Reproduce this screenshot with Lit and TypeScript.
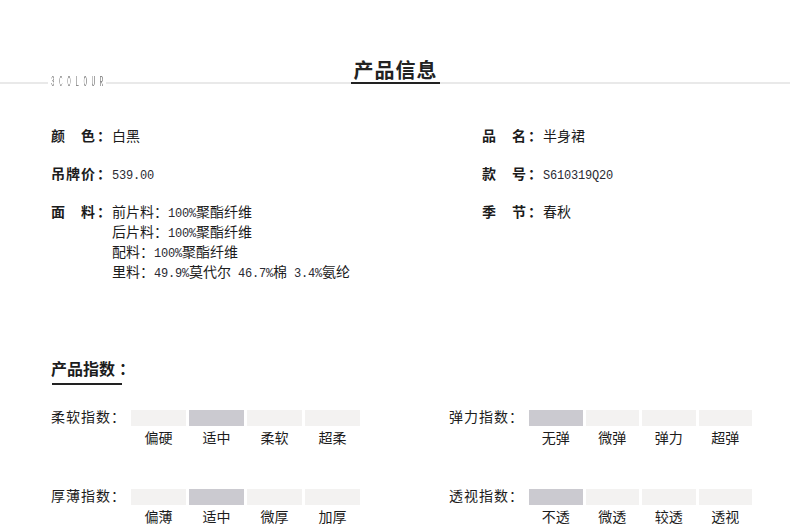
import { LitElement, html, css } from "lit";
import { customElement } from "lit/decorators.js";

const info = [
  { name: "颜色", value: html`<div class="line">白黑</div>` },
  { name: "品名", value: html`<div class="line">半身裙</div>` },
  { name: "吊牌价", value: html`<div class="line"><span class="num">539.00</span></div>` },
  { name: "款号", value: html`<div class="line"><span class="num">S610319Q20</span></div>` },
  {
    name: "面料",
    value: html`<div class="line">前片料：<span class="num">100%</span>聚酯纤维</div>
      <div class="line">后片料：<span class="num">100%</span>聚酯纤维</div>
      <div class="line">配料：<span class="num">100%</span>聚酯纤维</div>
      <div class="line">里料：<span class="num">49.9%</span>莫代尔<span class="num"> 46.7%</span>棉<span class="num"> 3.4%</span>氨纶</div>`,
  },
  { name: "季节", value: html`<div class="line">春秋</div>` },
];

const indices = [
  { label: "柔软指数：", opts: ["偏硬", "适中", "柔软", "超柔"], active: 1 },
  { label: "弹力指数：", opts: ["无弹", "微弹", "弹力", "超弹"], active: 0 },
  { label: "厚薄指数：", opts: ["偏薄", "适中", "微厚", "加厚"], active: 1 },
  { label: "透视指数：", opts: ["不透", "微透", "较透", "透视"], active: 0 },
];

@customElement("app-root")
export class AppRoot extends LitElement {
  static styles = css`
    :host {
      display: block;
      width: 790px;
      height: 531px;
      overflow: hidden;
      background: #fff;
      color: #1c1c1c;
      font-family: "Noto Sans CJK SC", "Liberation Sans", sans-serif;
      font-size: 14px;
      line-height: 20px;
    }
    .header {
      height: 82px;
      border-bottom: 2px solid #e9e9e9;
      display: grid;
      grid-template-columns: 1fr auto 1fr;
      align-items: end;
    }
    .brand {
      justify-self: start;
      box-sizing: border-box;
      width: 58px;
      height: 12px;
      margin: 0 0 -7px 48px;
      padding-left: 3px;
      background: #fff;
      color: #8e8e8e;
      font-family: "Liberation Mono", monospace;
      font-size: 15px;
      line-height: 12px;
      white-space: nowrap;
    }
    .brand span {
      display: inline-block;
      letter-spacing: 11.25px;
      transform: scaleX(0.4);
      transform-origin: left center;
      will-change: transform;
    }
    .title {
      margin: 0 0 -2px;
      padding: 0 2px 0 3px;
      border-bottom: 2px solid #222;
      font-size: 20px;
      font-weight: 700;
      letter-spacing: 1px;
      line-height: 24px;
      color: #222;
    }
    .info {
      display: grid;
      grid-template-columns: 431px 1fr;
      row-gap: 18px;
      padding: 41px 0 75px 51px;
    }
    .item {
      display: flex;
      align-items: flex-start;
    }
    .name {
      display: flex;
      justify-content: space-between;
      width: 44px;
      font-weight: 700;
    }
    .colon {
      box-sizing: border-box;
      width: 17px;
      padding-left: 2px;
      font-weight: 700;
      white-space: nowrap;
    }
    .line {
      height: 20px;
      white-space: nowrap;
    }
    .num {
      font-family: "Liberation Mono", monospace;
      font-size: 12px;
      letter-spacing: -0.2px;
      white-space: pre;
      color: #2a2a33;
    }
    .section {
      padding-left: 51px;
    }
    .section-title {
      width: 70px;
      height: 27px;
      margin: 0 0 25px 1px;
      border-bottom: 2px solid #222;
      font-size: 16px;
      font-weight: 700;
      line-height: 24px;
      white-space: nowrap;
      text-indent: -1px;
    }
    .section-colon {
      margin-left: 4px;
    }
    .metrics {
      display: grid;
      grid-template-columns: 398px 303px;
      row-gap: 42px;
    }
    .metric {
      display: grid;
      grid-template-columns: 80px 1fr;
      align-items: start;
    }
    .metric:nth-child(odd) {
      padding-right: 89px;
    }
    .metric-label {
      line-height: 12px;
      letter-spacing: 1px;
      white-space: nowrap;
    }
    .scale {
      display: grid;
      grid-template-columns: repeat(4, 1fr);
      column-gap: 3px;
    }
    .opt {
      text-align: center;
    }
    .bar {
      height: 16px;
      margin-bottom: 1px;
      background: #f3f2f1;
    }
    .opt.on .bar {
      background: #cbcad0;
    }
  `;

  render() {
    return html`
      <div class="header">
        <div class="brand"><span>3COLOUR</span></div>
        <h1 class="title">产品信息</h1>
        <div></div>
      </div>
      <div class="info">
        ${info.map(
          (i) => html`<div class="item">
            <div class="name">${[...i.name].map((c) => html`<span>${c}</span>`)}</div>
            <div class="colon">：</div>
            <div>${i.value}</div>
          </div>`
        )}
      </div>
      <div class="section">
        <h2 class="section-title">产品指数<span class="section-colon">：</span></h2>
        <div class="metrics">
          ${indices.map(
            (m) => html`<div class="metric">
              <div class="metric-label">${m.label}</div>
              <div class="scale">
                ${m.opts.map(
                  (o, k) => html`<div class="opt ${k === m.active ? "on" : ""}">
                    <div class="bar"></div>
                    ${o}
                  </div>`
                )}
              </div>
            </div>`
          )}
        </div>
      </div>
    `;
  }
}
